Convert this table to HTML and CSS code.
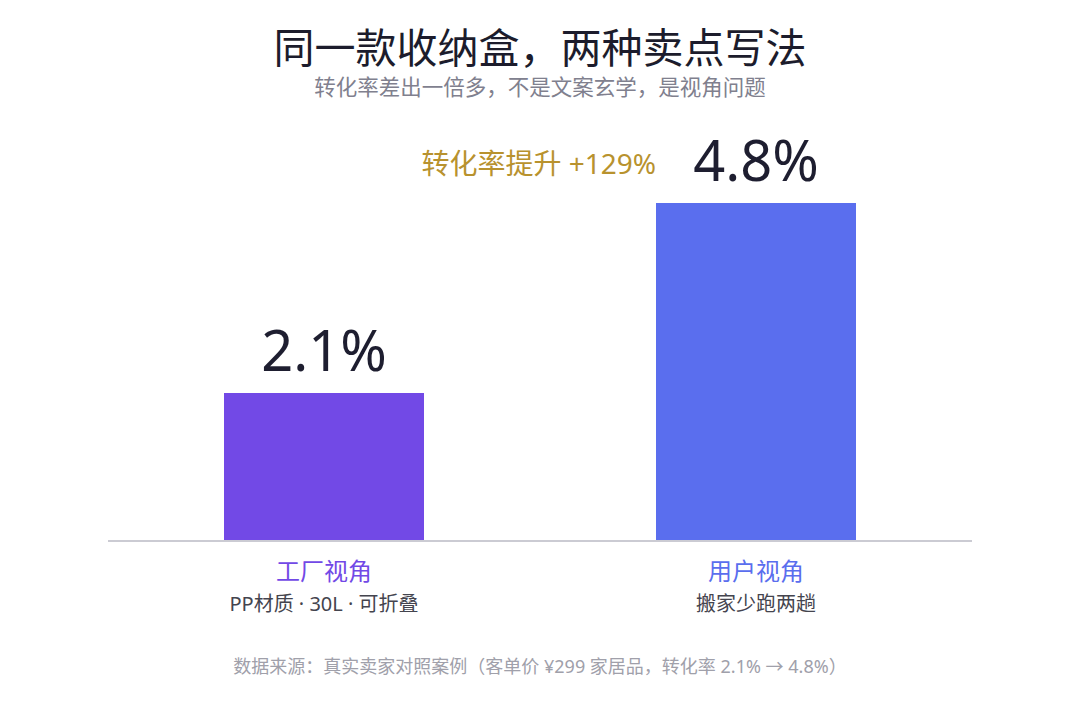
FILE: index.html
```html
<!DOCTYPE html>
<html lang="zh-CN">
<head>
<meta charset="utf-8">
<title>同一款收纳盒，两种卖点写法</title>
<link rel="stylesheet" href="styles.css">
</head>
<body>
<div class="page">
  <header class="head">
    <h1 class="title">同一款收纳盒，两种卖点写法</h1>
    <p class="subtitle">转化率差出一倍多，不是文案玄学，是视角问题</p>
  </header>

  <section class="chart">
    <div class="col">
      <div class="stack">
        <div class="value">2.1%</div>
        <div class="bar bar-factory" style="height:147px"></div>
      </div>
    </div>
    <div class="col">
      <div class="stack">
        <div class="value">4.8%</div>
        <div class="lift">转化率提升 +129%</div>
        <div class="bar bar-user" style="height:337px"></div>
      </div>
    </div>
  </section>

  <section class="labels">
    <div class="label">
      <div class="name name-factory">工厂视角</div>
      <div class="desc">PP材质 · 30L · 可折叠</div>
    </div>
    <div class="label">
      <div class="name name-user">用户视角</div>
      <div class="desc">搬家少跑两趟</div>
    </div>
  </section>

  <footer class="source">数据来源：真实卖家对照案例（客单价 ¥299 家居品，转化率 2.1% → 4.8%）</footer>
</div>
</body>
</html>
```

FILE: styles.css
```css
* { box-sizing: border-box; }

html, body {
  margin: 0;
  padding: 0;
  background: #ffffff;
}

body {
  width: 1080px;
  height: 702px;
  overflow: hidden;
  font-family: "Noto Sans", "Noto Sans CJK SC", sans-serif;
  color: #1e1e2e;
}

.page {
  display: flex;
  flex-direction: column;
  align-items: center;
  padding-top: 21px;
}

.head {
  display: flex;
  flex-direction: column;
  align-items: center;
}

.title {
  margin: 0;
  font-size: 41px;
  line-height: 52px;
  font-weight: 400;
  color: #1c1c2c;
}

.subtitle {
  margin: 0;
  font-size: 21.5px;
  line-height: 28px;
  color: #80808e;
}

.chart {
  width: 864px;
  display: grid;
  grid-template-columns: 1fr 1fr;
  align-items: end;
  border-bottom: 2px solid #cbcbd3;
  margin-top: 28px;
}

.col {
  display: flex;
  justify-content: center;
  align-items: flex-end;
}

.stack {
  position: relative;
  width: 200px;
  display: flex;
  flex-direction: column;
  align-items: center;
}

.value {
  font-size: 56px;
  line-height: 60px;
  font-weight: 400;
  color: #1e1e30;
  margin-bottom: 14px;
  white-space: nowrap;
}

.lift {
  position: absolute;
  right: 100%;
  top: 16px;
  font-size: 28px;
  line-height: 36px;
  color: #b8922e;
  white-space: nowrap;
}

.bar {
  width: 200px;
}

.bar-factory { background: #7249e6; }
.bar-user { background: #5a6eee; }

.labels {
  width: 864px;
  display: grid;
  grid-template-columns: 1fr 1fr;
  margin-top: 13px;
}

.label {
  display: flex;
  flex-direction: column;
  align-items: center;
}

.name {
  font-size: 24px;
  line-height: 32px;
}

.name-factory { color: #7249e6; }
.name-user { color: #5a6eee; }

.desc {
  margin-top: 4px;
  font-size: 20px;
  line-height: 26px;
  color: #44444e;
}

.source {
  margin-top: 37px;
  font-size: 18px;
  line-height: 24px;
  color: #a0a0aa;
}
```
